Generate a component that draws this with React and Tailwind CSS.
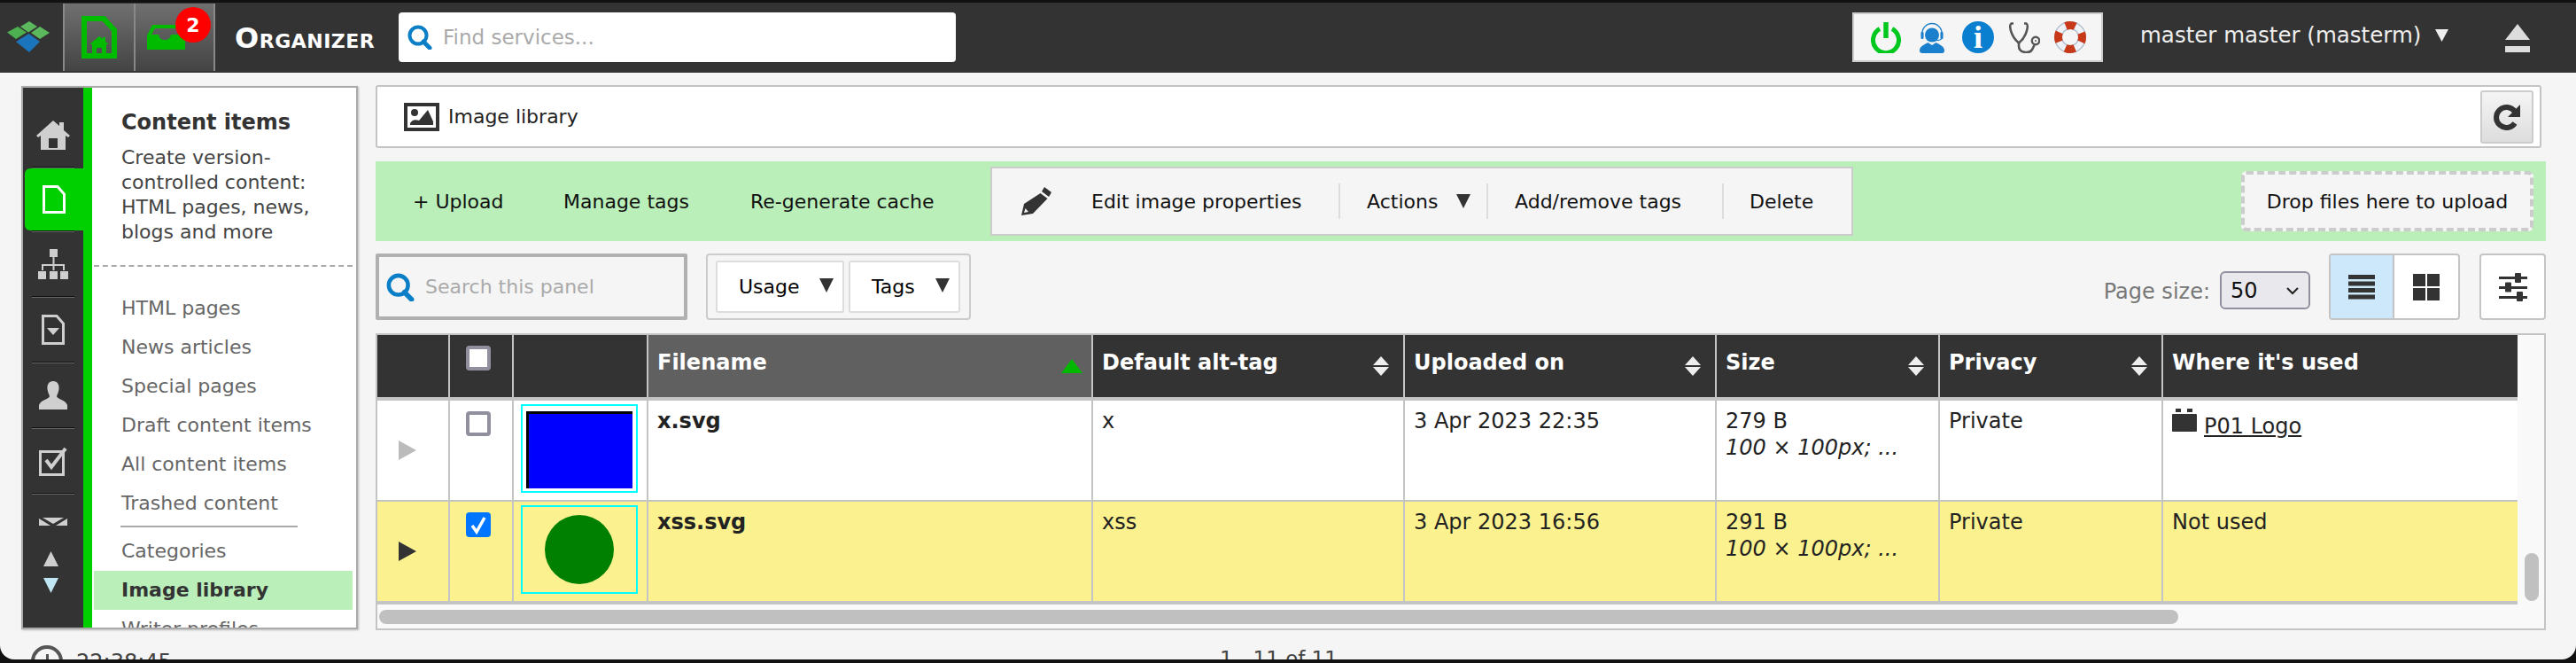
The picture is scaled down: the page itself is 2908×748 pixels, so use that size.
import React from 'react';

const gridCols = 'grid grid-cols-[82px_72px_152px_502px_352px_352px_252px_252px_400px]';

const Sep = () => <div className="mx-auto h-[2px] w-[48px] shrink-0 border-t border-b border-t-[#111] border-b-[#666]" />;

const HomeIcon = () => (
  <svg width="38" height="34" viewBox="0 0 38 34" fill="#cfcfcf">
    <path d="M19 0 L26 6 V2 H31 V11 L38 17 L36 19 L33 17 V33 H5 V17 L2 19 L0 17 Z M14 20 V31 H24 V20 Z" fillRule="evenodd" />
  </svg>
);
const PageIcon = ({ color }) => (
  <svg width="26" height="32" viewBox="0 0 26 32" fill="none" stroke={color} strokeWidth="3">
    <path d="M1.5 1.5 H17 L24.5 10 V30.5 H1.5 Z" />
  </svg>
);
const SitemapIcon = () => (
  <svg width="34" height="34" viewBox="0 0 34 34" fill="#cfcfcf">
    <rect x="13" y="0" width="9" height="9" />
    <rect x="16.5" y="9" width="2" height="8" />
    <rect x="4" y="17" width="26" height="2" />
    <rect x="4" y="17" width="2" height="7" />
    <rect x="28" y="17" width="2" height="7" />
    <rect x="16.5" y="17" width="2" height="7" />
    <rect x="0" y="25" width="9" height="9" />
    <rect x="13" y="25" width="9" height="9" />
    <rect x="25" y="25" width="9" height="9" />
  </svg>
);
const DocArrowIcon = () => (
  <svg width="26" height="34" viewBox="0 0 26 34">
    <path d="M1.5 1.5 H17 L24.5 10 V32.5 H1.5 Z" fill="none" stroke="#cfcfcf" strokeWidth="3" />
    <path d="M6 15 H20 L13 23 Z" fill="#cfcfcf" />
  </svg>
);
const UserIcon = () => (
  <svg width="32" height="32" viewBox="0 0 32 32" fill="#cfcfcf">
    <path d="M16 0 C21 0 23 4 22.5 9 C22 13 20.5 15 20 17 C20 20 30 21 32 27 V32 H0 V27 C2 21 12 20 12 17 C11.5 15 10 13 9.5 9 C9 4 11 0 16 0 Z" />
  </svg>
);
const CheckIcon = () => (
  <svg width="32" height="33" viewBox="0 0 32 33" fill="none" stroke="#cfcfcf">
    <rect x="1.5" y="5.5" width="26" height="26" strokeWidth="3" />
    <path d="M8 15 L14 23 L30 2" strokeWidth="4" />
  </svg>
);
const MailFlap = () => (
  <svg width="32" height="9" viewBox="0 0 32 9" fill="#cfcfcf">
    <path d="M4 0 H28 L16 7 Z" />
    <path d="M0 1 L13 9 H0 Z" />
    <path d="M32 1 L19 9 H32 Z" />
  </svg>
);
const Tri = ({ w, h, color, dir = 'up' }) => (
  <svg width={w} height={h} viewBox="0 0 10 10" preserveAspectRatio="none" fill={color} className="shrink-0">
    {dir === 'up' && <path d="M5 0 L10 10 H0 Z" />}
    {dir === 'down' && <path d="M0 0 H10 L5 10 Z" />}
    {dir === 'right' && <path d="M0 0 L10 5 L0 10 Z" />}
  </svg>
);
const SearchGlyph = ({ w = 28, h = 28 }) => (
  <svg width={w} height={h} viewBox="0 0 28 28" fill="none" stroke="#0a7fc8" className="shrink-0">
    <circle cx="12" cy="12" r="9.5" strokeWidth="4" />
    <path d="M18 19 L25 26" strokeWidth="5" strokeLinecap="round" />
  </svg>
);
const SortIcon = () => (
  <div className="mt-[24px] flex h-[22px] w-[18px] flex-col justify-between">
    <Tri w={18} h={10} color="#eee" dir="up" />
    <Tri w={18} h={10} color="#eee" dir="down" />
  </div>
);

const Logo = () => (
  <svg width="49" height="36" viewBox="0 0 49 36">
    <path d="M25 0 L34 6 L24 12.5 L15 6 Z" fill="#5cb85c" />
    <path d="M12 6 L22 12.5 L10 20 L0 12.5 Z" fill="#4caf50" />
    <path d="M37 6 L48 13 L37 20 L27 13 Z" fill="#5cb85c" />
    <path d="M24.5 14 L37 23 L25 35 L10 23 Z" fill="#1b75bc" />
  </svg>
);
const TabHomeIcon = () => (
  <svg width="40" height="48" viewBox="0 0 40 48">
    <path d="M3 3 H25 L37 16 V45 H3 Z" fill="none" stroke="#00bb00" strokeWidth="6" />
    <path d="M20 23 L24 26 V24 H27 V29 L31 32 H28 V45 H12 V32 H9 Z M17 36 V44 H23 V36 Z" fill="#00bb00" fillRule="evenodd" />
  </svg>
);
const TabInboxIcon = () => (
  <svg width="43" height="28" viewBox="0 0 43 28" fill="#00bb00">
    <path d="M0 28 V12 L6 0 H40 V4 H9 L5 11 H13 C14 19 26 19 27 11 H43 V28 Z" />
  </svg>
);
const PowerIcon = () => (
  <svg width="34" height="35" viewBox="0 0 34 35" fill="none" stroke="#00c81e" className="shrink-0">
    <path d="M10 7.5 A14.5 14.5 0 1 0 24 7.5" strokeWidth="5" />
    <path d="M17 0 V18" strokeWidth="5.5" />
  </svg>
);
const AgentIcon = () => (
  <svg width="28" height="35" viewBox="0 0 28 35" className="shrink-0">
    <circle cx="14" cy="14.5" r="8" fill="#1a7fcc" />
    <path d="M2.5 15 C2.5 -3 25.5 -3 25.5 15" fill="none" stroke="#1a7fcc" strokeWidth="1.4" />
    <rect x="1.5" y="11" width="3" height="8" rx="1.2" fill="#1a7fcc" />
    <rect x="23.5" y="11" width="3" height="8" rx="1.2" fill="#1a7fcc" />
    <path d="M25 18 C25 21 19 20.5 15 21" fill="none" stroke="#1a7fcc" strokeWidth="1.2" />
    <path d="M0 32 C0 27 6 25 9.5 23 L14 26 L18.5 23 C22 25 28 27 28 32 C28 35 26 35 24 35 H4 C2 35 0 35 0 32 Z" fill="#1a7fcc" />
  </svg>
);
const InfoIcon = () => (
  <div className="flex h-[36px] w-[36px] shrink-0 items-center justify-center rounded-full bg-[#0a7fd0] font-['Liberation_Serif',serif] text-[36px] font-bold leading-none text-white">
    i
  </div>
);
const StethIcon = () => (
  <svg width="36" height="35" viewBox="0 0 36 35" fill="none" stroke="#555" strokeWidth="2.6" className="shrink-0">
    <path d="M6 1.5 H3.5 C1 3 2 15 12 23.5 C22 15 23 3 20.5 1.5 H18" />
    <path d="M12 23.5 V27 C12 35 24 36 27 31 L29.5 26" />
    <circle cx="31" cy="21" r="4.2" strokeWidth="2.4" />
    <circle cx="31" cy="21" r="1" fill="#555" stroke="none" />
  </svg>
);
const RingIcon = () => (
  <svg width="36" height="36" viewBox="0 0 36 36" className="shrink-0">
    <circle cx="18" cy="18" r="13.5" fill="none" stroke="#eef1f5" strokeWidth="8" />
    <circle cx="18" cy="18" r="17.4" fill="none" stroke="#a9b7c8" strokeWidth="1.2" />
    <circle cx="18" cy="18" r="9.6" fill="none" stroke="#a9b7c8" strokeWidth="1.2" />
    <circle cx="18" cy="18" r="13.5" fill="none" stroke="#c8391a" strokeWidth="9" strokeDasharray="11 10.2" strokeDashoffset="5.5" />
  </svg>
);
const ImageIcon = () => (
  <svg width="40" height="32" viewBox="0 0 40 32" className="shrink-0">
    <rect width="40" height="32" fill="#333" />
    <rect x="4" y="4" width="32" height="24" fill="#fff" />
    <circle cx="12" cy="11" r="4" fill="#333" />
    <path d="M7 25 V23 C10 18 14 19 17 20 L27 8 L33 21 V25 Z" fill="#333" />
  </svg>
);
const PencilIcon = () => (
  <svg width="34" height="32" viewBox="0 0 34 32" fill="#333">
    <path d="M26 0 L34 6 L31 11 L23 5 Z" />
    <path d="M21.5 7 L29.5 13 L13 30 L0 32 L3 19 Z M4.5 24 L3 29 L8 28 Z" fillRule="evenodd" />
  </svg>
);
const RefreshIcon = () => (
  <svg width="32" height="30" viewBox="0 0 32 30" fill="none">
    <path d="M25 9 A11.5 11.5 0 1 0 25 22" stroke="#333" strokeWidth="6" />
    <path d="M31 1 V15 H17 Z" fill="#333" />
  </svg>
);
const ListIcon = () => (
  <svg width="30" height="28" viewBox="0 0 30 28" fill="#333">
    <rect y="0" width="30" height="5" />
    <rect y="7.5" width="30" height="5" />
    <rect y="15" width="30" height="5" />
    <rect y="22.5" width="30" height="5" />
  </svg>
);
const GridIcon = () => (
  <svg width="30" height="30" viewBox="0 0 30 30" fill="#333">
    <rect width="14" height="14" />
    <rect x="16" width="14" height="14" />
    <rect y="16" width="14" height="14" />
    <rect x="16" y="16" width="14" height="14" />
  </svg>
);
const SlidersIcon = () => (
  <svg width="32" height="32" viewBox="0 0 32 32" fill="#333">
    <rect y="4" width="32" height="3" />
    <rect x="18" y="0" width="7" height="11" rx="1" />
    <rect y="15" width="32" height="3" />
    <rect x="7" y="10.5" width="7" height="11" rx="1" />
    <rect y="26" width="32" height="3" />
    <rect x="20" y="21" width="7" height="11" rx="1" />
  </svg>
);
const BlockIcon = () => (
  <svg width="28" height="26" viewBox="0 0 28 26" fill="#333" className="shrink-0">
    <rect x="4" y="0" width="6" height="4" />
    <rect x="17" y="0" width="6" height="4" />
    <rect y="6" width="28" height="20" rx="1" />
  </svg>
);

const Box = ({ checked }) => (
  <div className={checked
    ? 'flex h-[28px] w-[28px] items-center justify-center rounded-[4px] bg-[#0075ff]'
    : 'h-[28px] w-[28px] rounded-[4px] border-4 border-[#8f8f9d] bg-white'}>
    {checked && (
      <svg width="20" height="22" viewBox="0 0 20 22" fill="none" stroke="#fff" strokeWidth="3.5">
        <path d="M3 12 L8 19 L17 3" />
      </svg>
    )}
  </div>
);

const nav = ['HTML pages', 'News articles', 'Special pages', 'Draft content items', 'All content items', 'Trashed content'];

const Sidebar = () => (
  <div className="flex h-[613px] w-[380px] overflow-hidden border-2 border-[#aaa] bg-white shadow-[1px_1px_2px_#bbb]">
    <div className="flex w-[68px] shrink-0 flex-col bg-[#333]">
      <div className="flex h-[89px] shrink-0 items-center justify-center pt-[18px]"><HomeIcon /></div>
      <Sep />
      <div className="ml-[2px] flex h-[70px] shrink-0 items-center justify-center rounded-l-[6px] bg-[#00d000]"><PageIcon color="#fff" /></div>
      <Sep />
      <div className="flex h-[72px] shrink-0 items-center justify-center"><SitemapIcon /></div>
      <Sep />
      <div className="flex h-[72px] shrink-0 items-center justify-center"><DocArrowIcon /></div>
      <Sep />
      <div className="flex h-[72px] shrink-0 items-center justify-center"><UserIcon /></div>
      <Sep />
      <div className="flex h-[72px] shrink-0 items-center justify-center"><CheckIcon /></div>
      <Sep />
      <div className="flex h-[27px] shrink-0 justify-center pt-[26px]"><MailFlap /></div>
      <div className="mt-[37px] flex flex-col items-center gap-[13px] pr-[5px]">
        <Tri w={17} h={17} color="#cfcfcf" dir="up" />
        <Tri w={17} h={17} color="#bfe6f2" dir="down" />
      </div>
    </div>
    <div className="w-[10px] shrink-0 bg-[#00d000]" />
    <div className="min-w-0 flex-1 pl-[2px] pr-[4px]">
      <div className="pl-[31px] pt-[19px]">
        <div className="text-[24px] font-bold leading-[40px] text-[#333]">Content items</div>
        <div className="mt-[6px] text-[22px] leading-[28px] text-[#444]">
          Create version-<br />controlled content:<br />HTML pages, news,<br />blogs and more
        </div>
      </div>
      <div className="mt-[23px] border-t-2 border-dashed border-[#aaa]" />
      <div className="mt-[25px] text-[22px] leading-[44px] text-[#666]">
        {nav.map((n) => <div key={n} className="pl-[31px]">{n}</div>)}
        <div className="ml-[30px] mt-[3px] h-[2px] w-[200px] bg-[#aaa]" />
        <div className="mt-[5px] pl-[31px]">Categories</div>
        <div className="bg-[#baefba] pl-[31px] font-bold text-[#333]">Image library</div>
        <div className="pl-[31px]">Writer profiles</div>
      </div>
    </div>
  </div>
);

const ThumbBlue = () => (
  <div className="ml-[8px] mt-[4px] h-[100px] w-[132px] border-2 border-[#00ffff] pl-[4px] pt-[6px]">
    <div className="h-[87px] w-[120px] border-l-[3px] border-t-[3px] border-black bg-[#0000ff]" />
  </div>
);
const ThumbGreen = () => (
  <div className="ml-[8px] mt-[4px] flex h-[100px] w-[132px] items-center justify-center border-2 border-[#00ffff]">
    <div className="h-[78px] w-[78px] rounded-full bg-[#008000]" />
  </div>
);

const Row = ({ bg, arrow, checked, thumb, name, alt, date, size, where, border }) => (
  <div className={`${gridCols} h-[112px] text-[24px] leading-[28px] text-[#222] ${bg} ${border}`}>
    <div className="flex items-end justify-center border-r-2 border-[#c4c4c4] pb-[45px] pr-[12px]"><Tri w={20} h={22} color={arrow} dir="right" /></div>
    <div className="border-r-2 border-[#c4c4c4] pl-[18px] pt-[12px]"><Box checked={checked} /></div>
    <div className="border-r-2 border-[#c4c4c4]">{thumb}</div>
    <div className="border-r-2 border-[#c4c4c4] pl-[10px] pt-[9px] font-bold">{name}</div>
    <div className="border-r-2 border-[#c4c4c4] pl-[10px] pt-[9px]">{alt}</div>
    <div className="border-r-2 border-[#c4c4c4] pl-[10px] pt-[9px]">{date}</div>
    <div className="border-r-2 border-[#c4c4c4] pl-[10px] pt-[9px]">
      <div>{size}</div>
      <div className="mt-[2px] italic">100 × 100px; ...</div>
    </div>
    <div className="border-r-2 border-[#c4c4c4] pl-[10px] pt-[9px]">Private</div>
    <div className="pl-[10px] pt-[9px]">{where}</div>
  </div>
);

const HeadCell = ({ label, sort, active }) => (
  <div className={`flex justify-between border-r-2 border-[#c4c4c4] pl-[10px] pr-[16px] last:border-r-0 ${active ? 'bg-[#606060]' : ''}`}>
    <span className="pt-[17px]">{label}</span>
    {sort && <SortIcon />}
    {active && <div className="-mr-[6px] mt-[27px]"><Tri w={24} h={16} color="#00b800" dir="up" /></div>}
  </div>
);

const Table = () => (
  <div className="flex h-[335px] w-[2450px] flex-col border-2 border-[#c4c4c4] bg-[#f9f9f9]">
    <div className="flex h-[304px] shrink-0">
      <div className="w-[2416px] shrink-0 border-b-4 border-[#c4c4c4]">
        <div className={`${gridCols} h-[74px] border-b-4 border-[#c4c4c4] bg-[#333] text-[24px] font-bold leading-[28px] text-white`}>
          <div className="border-r-2 border-[#c4c4c4]" />
          <div className="border-r-2 border-[#c4c4c4] pl-[18px] pt-[12px]"><Box /></div>
          <div className="border-r-2 border-[#c4c4c4]" />
          <HeadCell label="Filename" active />
          <HeadCell label="Default alt-tag" sort />
          <HeadCell label="Uploaded on" sort />
          <HeadCell label="Size" sort />
          <HeadCell label="Privacy" sort />
          <HeadCell label="Where it's used" />
        </div>
        <Row
          bg="bg-white" border="border-b-2 border-[#c4c4c4] box-content" arrow="#bbb" thumb={<ThumbBlue />}
          name="x.svg" alt="x" date="3 Apr 2023 22:35" size="279 B"
          where={(
            <div className="flex items-start gap-[8px]">
              <BlockIcon />
              <span className="mt-[6px] underline underline-offset-2">P01 Logo</span>
            </div>
          )}
        />
        <Row
          bg="bg-[#fbf28f]" border="" arrow="#333" checked thumb={<ThumbGreen />}
          name="xss.svg" alt="xss" date="3 Apr 2023 16:56" size="291 B" where="Not used"
        />
      </div>
      <div className="flex flex-1 flex-col justify-end pb-[4px] pl-[8px]">
        <div className="h-[54px] w-[16px] rounded-full bg-[#c0c0c0]" />
      </div>
    </div>
    <div className="pl-[2px] pt-[6px]">
      <div className="h-[16px] w-[2031px] rounded-full bg-[#c0c0c0]" />
    </div>
  </div>
);

const ActionBar = () => (
  <div className="mt-[15px] flex h-[90px] items-center bg-[#baefba] text-[22px] text-[#111]">
    <span className="ml-[42px] w-[170px] shrink-0">+ Upload</span>
    <span className="w-[211px] shrink-0">Manage tags</span>
    <span className="w-[271px] shrink-0">Re-generate cache</span>
    <div className="flex h-[78px] w-[974px] shrink-0 items-center border-2 border-[#ccc] bg-[#f5f5f5]">
      <div className="w-[112px] shrink-0 pl-[33px]"><PencilIcon /></div>
      <span className="w-[279px] shrink-0">Edit image properties</span>
      <div className="h-[40px] w-[2px] shrink-0 bg-[#ddd]" />
      <span className="w-[131px] shrink-0 pl-[30px]">Actions</span>
      <Tri w={16} h={16} color="#333" dir="down" />
      <div className="ml-[18px] h-[40px] w-[2px] shrink-0 bg-[#ddd]" />
      <span className="w-[264px] shrink-0 pl-[30px]">Add/remove tags</span>
      <div className="h-[40px] w-[2px] shrink-0 bg-[#ddd]" />
      <span className="pl-[29px]">Delete</span>
    </div>
    <div className="ml-auto mr-[14px] flex h-[68px] w-[330px] items-center justify-center rounded-[6px] border-[4px] border-dashed border-[#ccc] bg-[#f5f5f5]">
      Drop files here to upload
    </div>
  </div>
);

const App = () => (
  <div className="flex h-[748px] w-[2908px] flex-col overflow-hidden bg-[#111] font-['DejaVu_Sans',sans-serif]">
    <header className="mt-[3px] flex h-[79px] shrink-0 items-start bg-[#333] pt-[1px]">
      <div className="ml-[8px] mt-[20px] w-[63px] shrink-0"><Logo /></div>
      <div className="flex h-[76px] w-[80px] shrink-0 items-center justify-center border-l-2 border-[#888] bg-gradient-to-b from-[#707070] to-[#444]"><TabHomeIcon /></div>
      <div className="relative flex h-[76px] w-[92px] shrink-0 items-center border-x-2 border-[#888] bg-gradient-to-b from-[#707070] to-[#444] pl-[13px]">
        <TabInboxIcon />
        <div className="absolute left-[45px] top-[4px] flex h-[40px] w-[40px] items-center justify-center rounded-full bg-[#f00] text-[22px] font-bold text-white">2</div>
      </div>
      <div className="ml-[22px] mt-[21px] w-[185px] shrink-0 text-[32px] font-bold leading-[36px] tracking-[0.5px] text-white [font-variant-caps:small-caps]">Organizer</div>
      <div className="mt-[10px] flex h-[56px] w-[629px] shrink-0 items-center gap-[12px] rounded-[4px] bg-white pl-[10px]">
        <SearchGlyph />
        <span className="text-[23px] text-[#aaa]">Find services...</span>
      </div>
      <div className="ml-[1012px] mt-[10px] flex h-[56px] w-[283px] shrink-0 items-center border-2 border-[#ccc] bg-[#f5f5f5] pl-[19px]">
        <PowerIcon />
        <div className="ml-[21px]"><AgentIcon /></div>
        <div className="ml-[20px]"><InfoIcon /></div>
        <div className="ml-[16px]"><StethIcon /></div>
        <div className="ml-[16px]"><RingIcon /></div>
      </div>
      <div className="ml-[42px] mt-[18px] flex w-[344px] shrink-0 items-center gap-[16px] whitespace-nowrap text-[24.5px] leading-[36px] text-[#eee]">
        <span>master master (masterm)</span>
        <Tri w={15} h={14} color="#eee" dir="down" />
      </div>
      <div className="ml-[68px] mt-[23px] flex flex-col gap-[7px]">
        <Tri w={28} h={18} color="#ddd" dir="up" />
        <div className="h-[7px] w-[28px] bg-[#ddd]" />
      </div>
    </header>

    <div className="flex h-[662px] shrink-0 overflow-hidden rounded-b-[16px] bg-[#f5f5f5] text-[22px]">
      <aside className="ml-[24px] w-[400px] shrink-0 pt-[15px]">
        <Sidebar />
        <div className="ml-[11px] mt-[18px] flex items-start gap-[15px] text-[24px] leading-[32px] text-[#444]">
          <div className="flex h-[36px] w-[36px] shrink-0 justify-center rounded-full border-[4px] border-[#555]"><div className="mt-[6px] h-[14px] w-[3px] bg-[#555]" /></div>
          <span className="mt-[3px]">22:38:45</span>
        </div>
      </aside>

      <main className="w-[2450px] shrink-0 pt-[14px]">
        <div className="flex h-[71px] w-[2445px] items-center justify-between rounded-[3px] border-2 border-[#c4c4c4] bg-white pl-[30px] pr-[7px]">
          <div className="flex items-center gap-[10px]">
            <ImageIcon />
            <span className="text-[22px] text-[#222]">Image library</span>
          </div>
          <div className="flex h-[60px] w-[60px] items-center justify-center rounded-[3px] border-2 border-[#ccc] bg-gradient-to-b from-[#f5f5f5] to-[#ddd]">
            <RefreshIcon />
          </div>
        </div>

        <ActionBar />

        <div className="mt-[14px] flex h-[75px] items-start">
          <div className="flex h-[75px] w-[352px] items-center gap-[12px] rounded-[2px] border-4 border-[#b0b0b0] bg-[#f5f5f5] pl-[8px]">
            <SearchGlyph w={32} h={32} />
            <span className="text-[22px] text-[#aaa]">Search this panel</span>
          </div>
          <div className="ml-[21px] flex h-[75px] w-[299px] items-center gap-[5px] rounded-[4px] border-2 border-[#ccc] px-[9px]">
            <div className="flex h-[59px] w-[145px] items-center justify-between rounded-[3px] border-2 border-[#ddd] bg-white pl-[24px] pr-[10px]">
              <span>Usage</span><div className="mb-[4px]"><Tri w={16} h={16} color="#333" dir="down" /></div>
            </div>
            <div className="flex h-[59px] w-[126px] items-center justify-between rounded-[3px] border-2 border-[#ddd] bg-white pl-[24px] pr-[10px]">
              <span>Tags</span><div className="mb-[4px]"><Tri w={16} h={16} color="#333" dir="down" /></div>
            </div>
          </div>
          <div className="ml-auto mt-[20px] flex items-center">
            <span className="mt-[3px] text-[24px] text-[#777]">Page size:</span>
            <div className="ml-[11px] flex h-[43px] w-[102px] items-center justify-between rounded-[6px] border-2 border-[#8f8f9d] bg-[#e9e9ed] pl-[10px] pr-[10px] text-[24px] text-[#111]">
              <span>50</span>
              <svg width="16" height="10" viewBox="0 0 16 10" fill="none" stroke="#222" strokeWidth="2"><path d="M2 2 L8 8 L14 2" /></svg>
            </div>
          </div>
          <div className="ml-[21px] flex h-[75px] w-[148px] overflow-hidden rounded-[4px] border-2 border-[#c4c4c4] bg-white">
            <div className="flex w-[72px] items-center justify-center border-r-2 border-[#c4c4c4] bg-[#cde8fb]"><ListIcon /></div>
            <div className="flex flex-1 items-center justify-center"><GridIcon /></div>
          </div>
          <div className="ml-[22px] flex h-[75px] w-[75px] items-center justify-center rounded-[4px] border-2 border-[#c4c4c4] bg-white"><SlidersIcon /></div>
        </div>

        <div className="mt-[15px]"><Table /></div>

        <div className="mt-[18px] pl-[953px] text-[23px] leading-[28px] text-[#444]">1 - 11 of 11</div>
      </main>
    </div>
  </div>
);

export default App;
